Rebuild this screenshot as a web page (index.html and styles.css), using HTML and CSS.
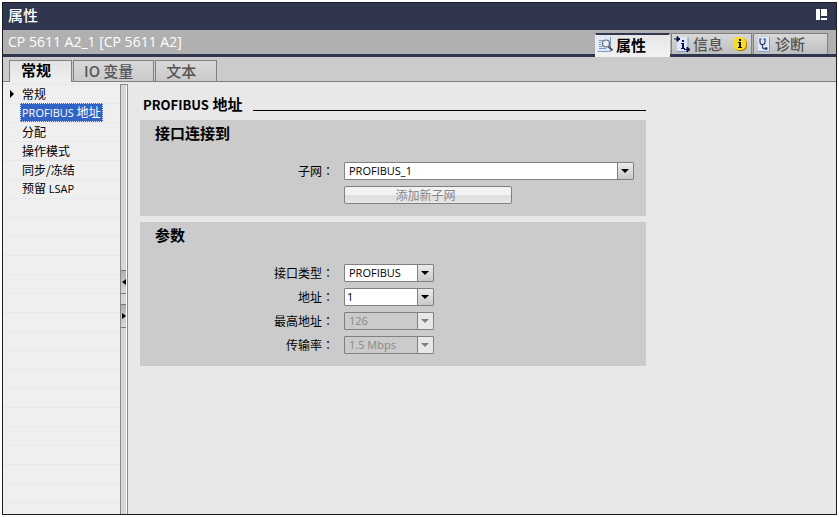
FILE: index.html
```html
<!DOCTYPE html>
<html lang="zh-CN">
<head>
    <meta charset="UTF-8">
    <meta name="viewport" content="width=device-width, initial-scale=1.0">
    <title>属性</title>
    <link rel="stylesheet" href="styles.css">
</head>
<body>
    <div class="window">
        <header class="titlebar">
            <span class="title">属性</span>
            <button type="button" class="layout-button" aria-label="布局">
                <svg width="11" height="11" viewBox="0 0 11 11" fill="#fff">
                    <rect x="0" y="0" width="4" height="11"/>
                    <rect x="5" y="0" width="6" height="7"/>
                    <rect x="5" y="9" width="6" height="2"/>
                </svg>
            </button>
        </header>

        <div class="object-bar">
            <span class="object-name">CP 5611 A2_1 [CP 5611 A2]</span>
            <div class="view-tabs">
                <button type="button" class="view-tab active">
                    <svg width="17" height="17" viewBox="0 0 17 17">
                        <rect x="0.500" y="1" width="13" height="14" fill="#dce8fb"/>
                        <path d="M0.500 15.500h13V1" fill="none" stroke="#7f9bd0"/>
                        <path d="M2 4.500h4M2 6.500h2M2 8.500h2M2 10.500h3M2 12.500h7" stroke="#7d96cc"/>
                        <circle cx="9" cy="7.500" r="3.500" fill="#e2f2fa" stroke="#666" stroke-width="1.200"/>
                        <path d="M11.500 10.500l4 4" stroke="#555" stroke-width="2"/>
                    </svg>
                    <span>属性</span>
                </button>
                <button type="button" class="view-tab">
                    <svg width="17" height="17" viewBox="0 0 17 17">
                        <rect x="3" y="1" width="11" height="14" fill="#dce8fb"/>
                        <path d="M3 15.500h11V1" fill="none" stroke="#7f9bd0"/>
                        <path d="M0 3h4M3 0.500v5l3-2.500zM10 13.500h4M13 11v5l3-2.500z" fill="#10104a" stroke="#10104a"/>
                        <path d="M8 4h2v2h-2zM7 7h3v5h1v1H7v-1h1V8H7z" fill="#10104a"/>
                    </svg>
                    <span>信息</span>
                    <svg class="info-badge" width="14" height="14" viewBox="0 0 14 14">
                        <rect x="1" y="1" width="13" height="13" rx="5" fill="#a8830c"/>
                        <rect x="0" y="0" width="13" height="13" rx="5" fill="#f8dc22"/>
                        <path d="M6 2h2v2H6zM5 5h3v5h1v1H5v-1h1V6H5z" fill="#111"/>
                    </svg>
                </button>
                <button type="button" class="view-tab">
                    <svg width="17" height="17" viewBox="0 0 17 17">
                        <rect x="2" y="1" width="11" height="14" fill="#dce8fb"/>
                        <path d="M2 15.500h11.500V1" fill="none" stroke="#7f9bd0"/>
                        <path d="M5.500 3H4V6q0 2.500 2.500 2.500T9 6V3H7.500M6.500 8.500V11q0 2 2.500 2" fill="none" stroke="#303a60" stroke-width="1.200"/>
                        <circle cx="10" cy="12.500" r="1.500" fill="#303a60"/>
                    </svg>
                    <span>诊断</span>
                </button>
            </div>
        </div>

        <div class="page-tabs">
            <button type="button" class="page-tab active">常规</button>
            <button type="button" class="page-tab">IO 变量</button>
            <button type="button" class="page-tab">文本</button>
        </div>

        <div class="content">
            <nav class="sidebar">
                <ul>
                    <li class="expandable"><a href="#">常规</a></li>
                    <li><a href="#" class="selected"><span class="latin">PROFIBUS</span> 地址</a></li>
                    <li><a href="#">分配</a></li>
                    <li><a href="#">操作模式</a></li>
                    <li><a href="#">同步/冻结</a></li>
                    <li><a href="#">预留 <span class="latin">LSAP</span></a></li>
                </ul>
            </nav>

            <div class="splitter">
                <button type="button" class="collapse" aria-label="收起">
                    <svg width="4" height="6" viewBox="0 0 4 6"><path d="M4 0v6L0 3z"/></svg>
                </button>
                <button type="button" class="collapse" aria-label="展开">
                    <svg width="4" height="6" viewBox="0 0 4 6"><path d="M0 0v6l4-3z"/></svg>
                </button>
            </div>

            <main class="main">
                <form class="settings">
                    <div class="heading">
                        <h1><span class="heading-latin">PROFIBUS</span> 地址</h1>
                        <span class="rule"></span>
                    </div>

                    <section class="panel">
                        <h2>接口连接到</h2>
                        <div class="fields">
                            <label for="subnet">子网<span class="colon" lang="zh-TW">：</span></label>
                            <div class="combo wide">
                                <select id="subnet"><option>PROFIBUS_1</option></select>
                            </div>
                            <button type="button" class="add-button" disabled>添加新子网</button>
                        </div>
                    </section>

                    <section class="panel">
                        <h2>参数</h2>
                        <div class="fields">
                            <label for="type">接口类型<span class="colon" lang="zh-TW">：</span></label>
                            <div class="combo">
                                <select id="type"><option>PROFIBUS</option></select>
                            </div>
                            <label for="address">地址<span class="colon" lang="zh-TW">：</span></label>
                            <div class="combo editable">
                                <select id="address"><option>1</option></select>
                            </div>
                            <label for="highest">最高地址<span class="colon" lang="zh-TW">：</span></label>
                            <div class="combo disabled">
                                <select id="highest" disabled><option>126</option></select>
                            </div>
                            <label for="rate">传输率<span class="colon" lang="zh-TW">：</span></label>
                            <div class="combo disabled">
                                <select id="rate" disabled><option>1.5 Mbps</option></select>
                            </div>
                        </div>
                    </section>
                </form>
            </main>
        </div>
    </div>
</body>
</html>
```

FILE: styles.css
```css
*, *::before, *::after {
    box-sizing: border-box;
}
body {
    margin: 0;
    padding: 2px;
    min-height: 100vh;
    display: flex;
    background: #fff;
    color: #000;
    font-family: "Noto Sans CJK SC", sans-serif;
    font-size: 12px;
    line-height: 18px;
}
button, select {
    font-family: inherit;
    font-size: inherit;
    line-height: inherit;
    margin: 0;
    padding: 0;
}
svg {
    display: block;
    flex: none;
}
.window {
    flex: 1;
    display: flex;
    flex-direction: column;
    border: 1px solid #1c1c20;
    background: #e8e8e8;
}

/* title and object name */
.titlebar {
    display: flex;
    align-items: center;
    justify-content: space-between;
    height: 27px;
    padding: 0 9px 4px 5px;
    background: #2f364d;
    color: #fff;
}
.title {
    font-size: 15px;
    font-weight: 500;
}
.layout-button {
    border: 0;
    background: none;
}
.object-bar {
    display: flex;
    justify-content: space-between;
    height: 27px;
    padding-left: 5px;
    padding-right: 8px;
    background: #b0b0b0;
    border-bottom: 3px solid #2f364d;
}
.object-name {
    color: #fff;
    font-family: "Open Sans", sans-serif;
    font-size: 14px;
    line-height: 24px;
}
.view-tabs {
    display: flex;
    gap: 1px;
    padding-top: 3px;
}
.view-tab {
    display: flex;
    align-items: center;
    gap: 2px;
    width: 75px;
    height: 21px;
    padding: 0 2px;
    border: 1px solid #808080;
    border-bottom: 0;
    background: linear-gradient(#d8d8d8, #bfbfbf);
    color: #555;
    font-size: 15px;
    font-weight: 500;
}
.view-tab:nth-child(2) {
    width: 81px;
}
.view-tab.active {
    height: 24px;
    padding: 0 1px 3px;
    border-color: #f0f0f0;
    border-top: 2px solid #2f364d;
    background: linear-gradient(#e6e6e6, #f2f2f2);
    color: #000;
    font-weight: 700;
}
.info-badge {
    margin-left: auto;
    margin-right: 2px;
}

/* page tabs */
.page-tabs {
    display: flex;
    align-items: flex-end;
    gap: 1px;
    height: 25px;
    padding: 0 6px;
    background: #cbcbcb;
    border-bottom: 1px solid #808080;
}
.page-tab {
    height: 21px;
    padding: 0 20px 1px 10px;
    border: 1px solid #808080;
    border-bottom: 0;
    background: linear-gradient(#d8d8d8, #cacaca);
    color: #555;
    font-size: 15px;
    font-weight: 500;
}
.page-tab.active {
    height: 22px;
    margin-bottom: -1px;
    padding: 0 20px 3px 11px;
    background: linear-gradient(#e2e2e2, #efefef);
    color: #000;
    font-weight: 700;
}

/* navigation */
.content {
    flex: 1;
    display: flex;
}
.sidebar {
    width: 117px;
    padding-top: 2px;
    background: #efefef;
}
.sidebar ul {
    height: 100%;
    margin: 0;
    padding: 0;
    list-style: none;
    background: repeating-linear-gradient(#e8e8e8 0 1px, #efefef 1px 19px);
}
.sidebar li {
    display: flex;
    align-items: center;
    height: 19px;
    padding-left: 17px;
}
.sidebar li.expandable::before {
    content: "";
    margin-left: -10px;
    margin-right: 6px;
    border: 4px solid transparent;
    border-left: 4px solid #000;
    border-right: 0;
}
.sidebar a {
    padding: 0 1px;
    border: 1px solid transparent;
    color: #000;
    line-height: 16px;
    text-decoration: none;
    white-space: nowrap;
}
.sidebar a.selected {
    background: #3163c5;
    border: 1px dotted #dce4f4;
    color: #fff;
}
.latin {
    font-family: "Open Sans", sans-serif;
    font-size: 11px;
}
.splitter {
    display: flex;
    flex-direction: column;
    align-items: flex-start;
    gap: 10px;
    width: 8px;
    margin-top: 2px;
    padding-top: 185px;
    border: 1px solid #888;
    border-bottom: 0;
    background: linear-gradient(to right, #d6d6d6 5px, #fff 5px);
}
.collapse {
    display: flex;
    align-items: center;
    justify-content: center;
    width: 5px;
    height: 24px;
    border: 1px solid #777;
    border-left: 0;
    border-right: 0;
    background: linear-gradient(#b0b0b0, #d8d8d8);
}

/* settings */
.main {
    flex: 1;
    padding: 12px;
}
.settings {
    max-width: 506px;
}
.heading {
    display: flex;
    gap: 11px;
    height: 26px;
    padding-left: 3px;
}
h1, h2 {
    margin: 0;
    font-size: 15px;
    font-weight: 700;
    line-height: 20px;
    white-space: nowrap;
}
.heading-latin {
    font-size: 13px;
}
.rule {
    flex: 1;
    height: 17px;
    border-bottom: 1px solid #000;
}
.panel {
    margin-bottom: 6px;
    padding: 3px 12px 12px 15px;
    background: #cbcbcb;
}
h2 {
    margin-bottom: 19px;
}
.fields {
    display: grid;
    grid-template-columns: 179px 1fr;
    gap: 6px 10px;
}
.fields label {
    text-align: right;
}
.colon {
    font-family: "Noto Sans CJK TC", sans-serif;
}
.combo {
    position: relative;
    width: 90px;
    height: 18px;
}
.combo.wide {
    width: auto;
}
.combo select {
    display: block;
    width: 100%;
    height: 18px;
    padding: 0 18px 0 4px;
    appearance: none;
    border: 1px solid #808080;
    border-radius: 1px;
    background: #fff;
    color: #000;
    font-family: "Open Sans", sans-serif;
    font-size: 11px;
    line-height: 16px;
}
.combo.editable select {
    padding-left: 2px;
}
.combo::before {
    content: "";
    position: absolute;
    top: 1px;
    right: 1px;
    width: 16px;
    height: 16px;
    border-left: 1px solid #808080;
    background: linear-gradient(#ececec, #c8c8c8);
    pointer-events: none;
}
.combo::after {
    content: "";
    position: absolute;
    top: 7px;
    right: 5px;
    border: 4px solid transparent;
    border-top-color: #000;
    border-bottom: 0;
    pointer-events: none;
}
.combo.disabled select {
    background: #cbcbcb;
    color: #888;
    opacity: 1;
}
.combo.disabled::before {
    background: #e8e8e8;
}
.combo.disabled::after {
    border-top-color: #808080;
}
.add-button {
    grid-column: 2;
    width: 168px;
    height: 18px;
    padding-right: 5px;
    border: 1px solid #808080;
    border-radius: 2px;
    background: linear-gradient(#f2f2f2 50%, #dedede 50%, #e6e6e6);
    color: #888;
    line-height: 16px;
}
```
